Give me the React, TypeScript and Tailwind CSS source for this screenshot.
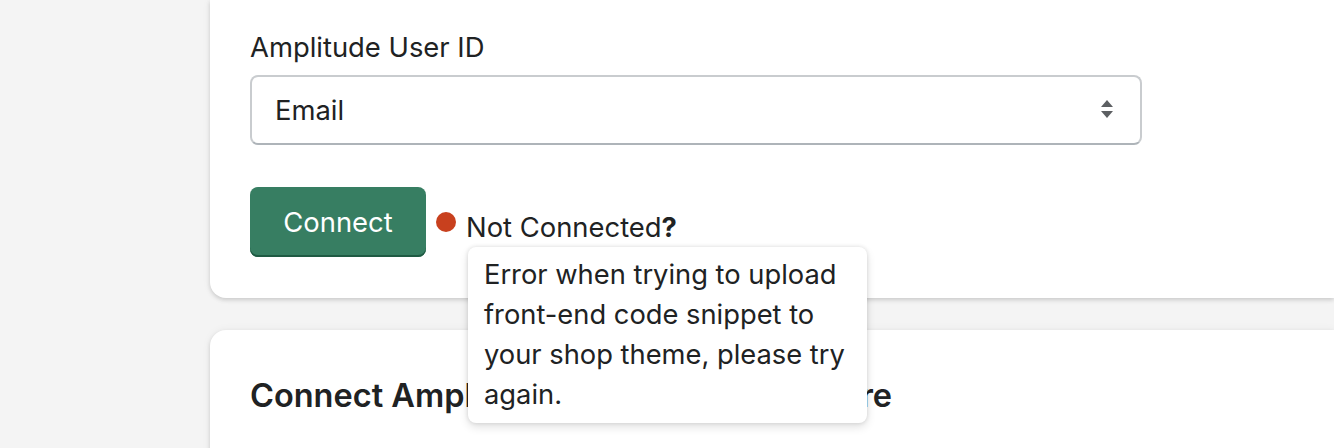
import React from "react";

export default function App() {
  return (
    <div className="min-h-screen w-full overflow-hidden bg-[#f4f4f4] pl-[210px] text-[#202223] font-['Inter',sans-serif]">
      <div className="rounded-bl-[16px] bg-white px-[40px] pb-[41px] pt-[27px] shadow-[0_0_10px_rgba(23,24,24,0.05),0_2px_4px_rgba(0,0,0,0.15)]">
        <div className="mb-[8px] text-[27.4px] leading-[40px]">Amplitude User ID</div>
        <div className="flex h-[70px] w-[892px] items-center justify-between rounded-[8px] border-2 border-[#c9cccf] border-b-[#aeb4b9] bg-white pl-[23px] pr-[26px] text-[27.4px] leading-[40px]">
          <span>Email</span>
          <svg width="14" height="20" viewBox="0 0 14 20" className="text-[#5c5f62]">
            <path d="M7 0 L13 7 L1 7 Z" fill="currentColor" />
            <path d="M1 11 L13 11 L7 18 Z" fill="currentColor" />
          </svg>
        </div>
        <div className="mt-[42px] flex items-center">
          <button className="h-[70px] w-[176px] rounded-[8px] bg-[#377e62] text-[27.4px] leading-[40px] text-white shadow-[inset_0_-2px_0_#1f5a43]">
            Connect
          </button>
          <span className="ml-[10px] h-[20px] w-[20px] rounded-full bg-[#c8401e]" />
          <div className="relative ml-[10px] mt-[9px] text-[27.4px] leading-[40px]">
            <span>Not Connected</span>
            <span className="font-bold">?</span>
            <div className="absolute left-[2px] top-[40px] z-10 w-[399px] rounded-[8px] bg-white px-[16px] py-[8px] text-[27.3px] leading-[40px] shadow-[0_0_4px_rgba(0,0,0,0.12),0_4px_10px_rgba(0,0,0,0.12)]">
              Error when trying to upload front-end code snippet to your shop theme, please try again.
            </div>
          </div>
        </div>
      </div>
      <div className="mt-[32px] h-[200px] rounded-tl-[16px] bg-white px-[40px] pt-[42px] shadow-[0_0_10px_rgba(23,24,24,0.05),0_2px_4px_rgba(0,0,0,0.15)]">
        <h2 className="text-[32.5px] font-semibold leading-[48px]">Connect Amplitude to your Shopify Store</h2>
      </div>
    </div>
  );
}
